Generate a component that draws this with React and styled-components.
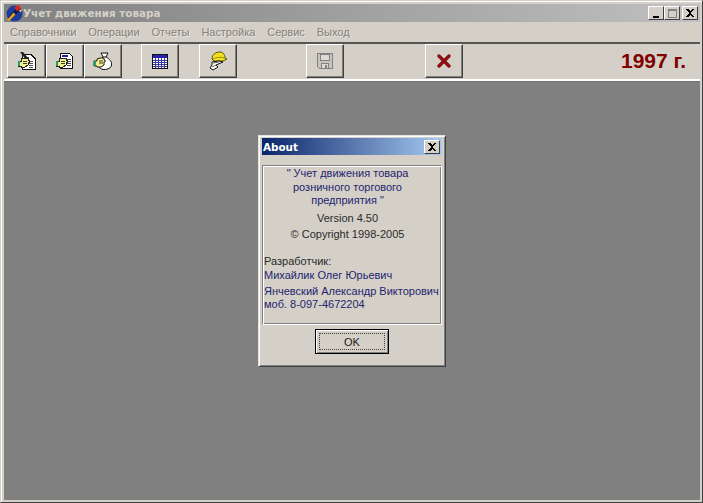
import React from "react";
import styled, { createGlobalStyle } from "styled-components";

const GlobalStyle = createGlobalStyle`
  html, body { margin: 0; padding: 0; background: #d4d0c8; overflow: hidden; }
  * { box-sizing: border-box; }
`;

const raisedThin = `
  border-top: 1px solid #fff;
  border-left: 1px solid #fff;
  border-right: 1px solid #404040;
  border-bottom: 1px solid #404040;
`;

const Window = styled.div`
  width: 703px;
  height: 503px;
  background: #d4d0c8;
  border-top: 1px solid #d4d0c8;
  border-left: 1px solid #d4d0c8;
  border-right: 1px solid #404040;
  border-bottom: 1px solid #404040;
  box-shadow: inset 1px 1px 0 #fff;
  padding: 3px 2px 2px 3px;
  display: flex;
  flex-direction: column;
  font-family: "Liberation Sans", Arial, sans-serif;
`;

const TitleBar = styled.div`
  height: 18px;
  flex: none;
  display: flex;
  align-items: center;
  padding: 0 2px 0 1px;
  background: linear-gradient(90deg, #808080 0%, #c0c0c0 100%);
`;

const TitleText = styled.span`
  font: bold 10.4px "DejaVu Sans", sans-serif;
  color: #d4d0c8;
  white-space: nowrap;
`;

const Spacer = styled.div`
  flex: 1;
`;

const CaptionButton = styled.div`
  width: 16px;
  height: 14px;
  margin-left: ${(p) => p.$gap || 0}px;
  background: #d4d0c8;
  ${raisedThin}
  display: flex;
  align-items: center;
  justify-content: center;
`;

const MenuBar = styled.div`
  height: 20px;
  flex: none;
  display: flex;
  align-items: center;
  gap: 12px;
  padding-left: 6px;
`;

const MenuItem = styled.span`
  font-size: 11px;
  letter-spacing: -0.03px;
  color: #84827c;
  text-shadow: 1px 1px 0 #e6e3dc;
  white-space: nowrap;
`;

const ToolBar = styled.div`
  height: 39px;
  flex: none;
  display: flex;
  align-items: center;
  padding: 0 0 1px 3px;
  border-top: 2px solid #55544f;
  border-bottom: 2px solid #fff;
`;

const ToolButton = styled.div`
  width: ${(p) => p.$w || 38}px;
  height: 34px;
  margin-left: ${(p) => p.$left || 0}px;
  flex: none;
  background: #d4d0c8;
  ${raisedThin}
  box-shadow: inset -1px -1px 0 #808080;
  display: flex;
  align-items: center;
  justify-content: center;
`;

const YearLabel = styled.span`
  margin-left: auto;
  margin-right: 14px;
  font-size: 21px;
  font-weight: bold;
  color: #800000;
  white-space: nowrap;
`;

const Workspace = styled.div`
  flex: 1;
  position: relative;
  background: #808080;
  border-top: 1px solid #707070;
`;

const Dialog = styled.div`
  position: absolute;
  left: 254px;
  top: 53px;
  width: 188px;
  height: 232px;
  background: #d4d0c8;
  border-top: 1px solid #e6e3dc;
  border-left: 1px solid #e6e3dc;
  border-right: 1px solid #404040;
  border-bottom: 1px solid #404040;
  box-shadow: inset 1px 1px 0 #fff, inset -1px -1px 0 #808080;
  padding: 2px 3px 0 3px;
  display: flex;
  flex-direction: column;
`;

const DialogTitle = styled.div`
  height: 17px;
  flex: none;
  display: flex;
  align-items: center;
  justify-content: space-between;
  padding: 0 2px 0 1px;
  background: linear-gradient(90deg, #0a246a 0%, #a6caf0 100%);
  color: #fff;
  font: bold 10.4px "DejaVu Sans", sans-serif;
`;

const InfoPanel = styled.div`
  width: 180px;
  height: 160px;
  margin: 10px 0 0 0;
  padding: 1px 1px 0 1px;
  border-top: 1px solid #808080;
  border-left: 1px solid #808080;
  border-right: 1px solid #fff;
  border-bottom: 1px solid #fff;
  box-shadow: inset 1px 1px 0 #fff, inset -1px -1px 0 #808080;
  font-size: 11px;
  display: flex;
  flex-direction: column;
`;

const CenterLine = styled.div`
  text-align: center;
  color: ${(p) => (p.$blue ? "#24246e" : "#2a2a2a")};
  line-height: 13.5px;
  margin-top: ${(p) => p.$top || 0}px;
  margin-right: 9px;
  white-space: nowrap;
`;

const Line = styled.div`
  color: ${(p) => (p.$blue ? "#24246e" : "#2a2a2a")};
  line-height: ${(p) => p.$lh || 14}px;
  margin-top: ${(p) => p.$top || 0}px;
  white-space: nowrap;
`;

const OkOuter = styled.div`
  width: 74px;
  height: 25px;
  margin: 4px auto 0;
  border: 1px solid #000;
  background: #d4d0c8;
  box-shadow: inset 1px 1px 0 #fff, inset -1px -1px 0 #808080;
  padding: 3px;
  display: flex;
`;

const OkInner = styled.div`
  flex: 1;
  border: 1px dotted #404040;
  display: flex;
  align-items: center;
  justify-content: center;
  font-size: 11px;
  color: #1a1a1a;
`;

function AppIcon() {
  return (
    <svg width="18" height="18" viewBox="0 0 17 17">
      <circle cx="9" cy="9" r="7.5" fill="#1c3c9c" />
      <path d="M3 13 Q8 6 13 3 L15 5 Q10 10 5 15 Z" fill="#0a1a50" />
      <path d="M2 15 L8 8 L10 10 L4 16 Z" fill="#e8a020" />
      <path d="M9 3 L13 1 L15 4 L11 7 Z" fill="#e02020" />
      <path d="M13 6 L16 5 L15 8 Z" fill="#f0d040" />
    </svg>
  );
}

function Hand() {
  return (
    <g>
      <path d="M1 10 H4 V8 L7 7 H11 V9 H12 V11 H11 V14 L8 16 H4 V15 H1 Z" fill="#f0f090" stroke="#202020" strokeWidth="1" />
      <rect x="1" y="10" width="2" height="5" fill="#20a060" />
      <path d="M6 10 H10 M6 12 H10" stroke="#404020" strokeWidth="1" />
    </g>
  );
}

function DocEditIcon() {
  return (
    <svg width="20" height="20" viewBox="0 0 20 20" shapeRendering="crispEdges">
      <path d="M5.5 3.5 H14 L18.5 8 V18.5 H5.5 Z" fill="#fff" stroke="#101010" />
      <path d="M8 6 H12 M10 10 H16 M12 12 H16 M12 14 H16 M12 16 H16" stroke="#505050" />
      <path d="M3 1 L6 1 L12 8 L9 9 Z" fill="#202020" shapeRendering="auto" />
      <Hand />
    </svg>
  );
}

function DocBlueIcon() {
  return (
    <svg width="20" height="20" viewBox="0 0 20 20" shapeRendering="crispEdges">
      <path d="M5.5 2.5 H14.5 L17.5 5.5 V17.5 H5.5 Z" fill="#fff" stroke="#101010" />
      <rect x="7" y="4" width="6" height="2" fill="#2020a0" />
      <path d="M10 8 H16 M11 10 H16 M12 12 H16 M12 14 H16" stroke="#404040" />
      <Hand />
    </svg>
  );
}

function BagIcon() {
  return (
    <svg width="20" height="20" viewBox="0 0 20 20">
      <path d="M8 2 H15 L13 6 C17 8 19 11 18.5 14 C18 17 15 18.5 11 18.5 C8 18.5 6 17 6 14 C6 10 8 8 10 6 Z" fill="#fff" stroke="#101010" />
      <path d="M10 6 H13" stroke="#101010" />
      <Hand />
    </svg>
  );
}

function TableIcon() {
  return (
    <svg width="16" height="15" viewBox="0 0 16 15" shapeRendering="crispEdges">
      <rect x="0.5" y="0.5" width="15" height="14" fill="#fff" stroke="#101010" />
      <rect x="1" y="1" width="14" height="3" fill="#2424b0" />
      <path d="M1 6.5 H15 M1 8.5 H15 M1 10.5 H15 M1 12.5 H15 M3.5 4 V14 M6.5 4 V14 M9.5 4 V14 M12.5 4 V14" stroke="#3838a0" />
    </svg>
  );
}

function HardHatIcon() {
  return (
    <svg width="20" height="20" viewBox="0 0 20 20">
      <path d="M4 8 C4 3 8 1 12 1 C15 1 17 4 17 7 L19 8 L15 10 L6 10 Z" fill="#f0e020" stroke="#605000" />
      <path d="M5 8 C8 6 13 6 17 7" stroke="#a09000" fill="none" />
      <path d="M4 11 L11 10 L15 11 L8 14 L10 16 L5 19 L2 17 L4 14 Z" fill="#fff" stroke="#101010" />
      <path d="M5 12 L11 11 M4 16 L8 14" stroke="#606060" />
    </svg>
  );
}

function FloppyIcon() {
  return (
    <svg width="16" height="16" viewBox="0 0 16 16" shapeRendering="crispEdges">
      <path d="M0.5 0.5 H15.5 V15.5 H2.5 L0.5 13.5 Z" fill="#c8c5bd" stroke="#808080" />
      <rect x="3.5" y="1" width="9" height="6.5" fill="#dedbd4" stroke="#808080" />
      <rect x="4.5" y="10.5" width="7" height="5" fill="#dedbd4" stroke="#808080" />
      <rect x="8" y="11.5" width="2" height="3" fill="#808080" />
    </svg>
  );
}

function RedCross() {
  return (
    <svg width="14" height="14" viewBox="0 0 14 14">
      <path d="M2 2 L12 12 M12 2 L2 12" stroke="#8c1010" strokeWidth="3.4" strokeLinecap="round" />
    </svg>
  );
}

function CloseGlyph() {
  return (
    <svg width="8" height="8" viewBox="0 0 8 8" shapeRendering="crispEdges">
      <path d="M0 0 H2 L4 2 L6 0 H8 L5 3.5 V4.5 L8 8 H6 L4 6 L2 8 H0 L3 4.5 V3.5 Z" fill="#000" />
    </svg>
  );
}

function MinGlyph() {
  return (
    <svg width="8" height="9" viewBox="0 0 8 9" shapeRendering="crispEdges">
      <rect x="1" y="7" width="6" height="2" fill="#000" />
    </svg>
  );
}

function MaxGlyph() {
  return (
    <svg width="9" height="9" viewBox="0 0 9 9" shapeRendering="crispEdges">
      <rect x="0.5" y="0.5" width="8" height="8" fill="none" stroke="#808080" />
      <rect x="0" y="0" width="9" height="2" fill="#808080" />
    </svg>
  );
}

const MENU = ["Справочники", "Операции", "Отчеты", "Настройка", "Сервис", "Выход"];

export default function App() {
  return (
    <Window>
      <GlobalStyle />
      <TitleBar>
        <AppIcon />
        <TitleText>Учет движения товара</TitleText>
        <Spacer />
        <CaptionButton><MinGlyph /></CaptionButton>
        <CaptionButton><MaxGlyph /></CaptionButton>
        <CaptionButton $gap={2}><CloseGlyph /></CaptionButton>
      </TitleBar>
      <MenuBar>
        {MENU.map((m) => (
          <MenuItem key={m}>{m}</MenuItem>
        ))}
      </MenuBar>
      <ToolBar>
        <ToolButton $w={39}><DocEditIcon /></ToolButton>
        <ToolButton><DocBlueIcon /></ToolButton>
        <ToolButton><BagIcon /></ToolButton>
        <ToolButton $left={19}><TableIcon /></ToolButton>
        <ToolButton $left={20}><HardHatIcon /></ToolButton>
        <ToolButton $left={69}><FloppyIcon /></ToolButton>
        <ToolButton $left={81}><RedCross /></ToolButton>
        <YearLabel>1997 г.</YearLabel>
      </ToolBar>
      <Workspace>
        <Dialog>
          <DialogTitle>
            About
            <CaptionButton><CloseGlyph /></CaptionButton>
          </DialogTitle>
          <InfoPanel>
            <CenterLine $blue>" Учет движения товара</CenterLine>
            <CenterLine $blue>розничного торгового</CenterLine>
            <CenterLine $blue>предприятия "</CenterLine>
            <CenterLine $top={4}>Version 4.50</CenterLine>
            <CenterLine $top={3}>© Copyright 1998-2005</CenterLine>
            <Line $top={12}>Разработчик:</Line>
            <Line $blue>Михайлик Олег Юрьевич</Line>
            <Line $blue $top={2}>Янчевский Александр Викторович</Line>
            <Line $blue $lh={13}>моб. 8-097-4672204</Line>
          </InfoPanel>
          <OkOuter>
            <OkInner>OK</OkInner>
          </OkOuter>
        </Dialog>
      </Workspace>
    </Window>
  );
}
